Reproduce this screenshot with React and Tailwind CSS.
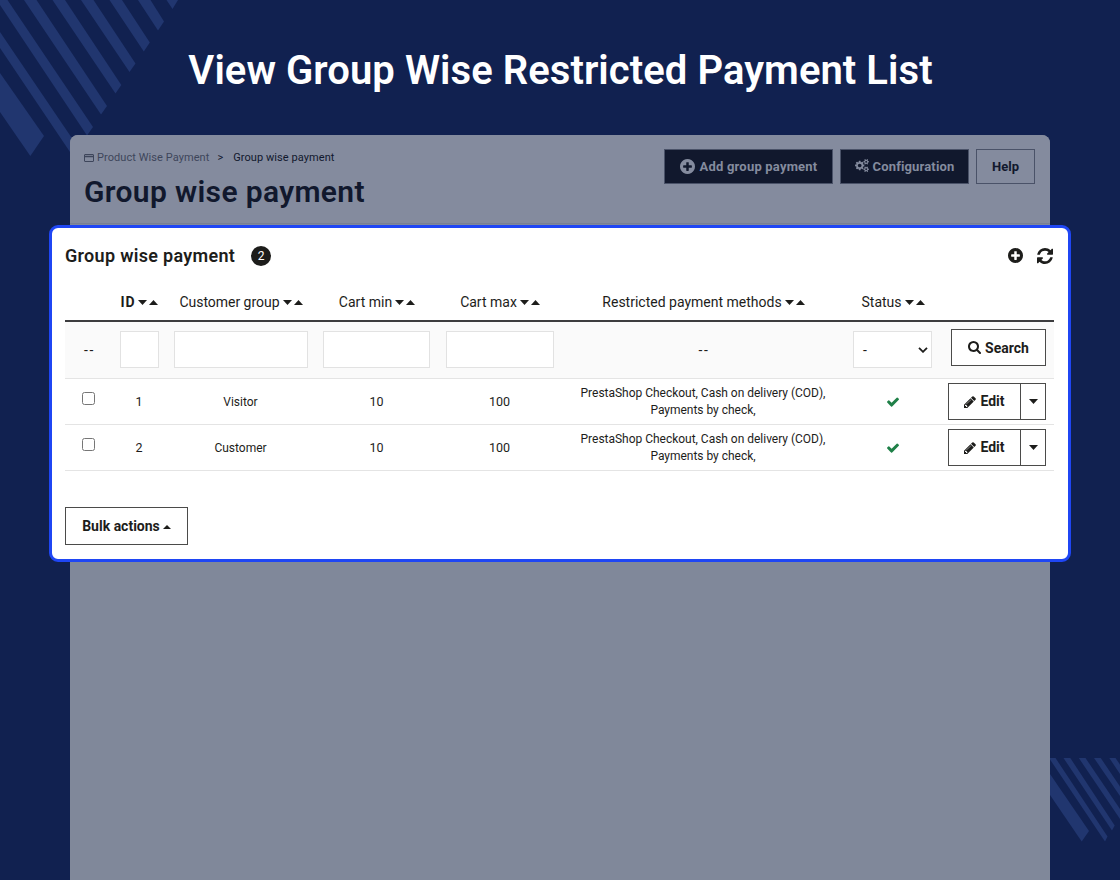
import { useState } from 'react';

// Font Awesome 4 glyphs
const ICONS = {
  plus: {
    box: '128 128 1536 1536',
    d: 'M1344 960v-128q0-26-19-45t-45-19h-256v-256q0-26-19-45t-45-19h-128q-26 0-45 19t-19 45v256h-256q-26 0-45 19t-19 45v128q0 26 19 45t45 19h256v256q0 26 19 45t45 19h128q26 0 45-19t19-45v-256h256q26 0 45-19t19-45zm320-64q0 209-103 385.5t-279.5 279.5-385.5 103-385.5-103-279.5-279.5-103-385.5 103-385.5 279.5-279.5 385.5-103 385.5 103 279.5 279.5 103 385.5z',
  },
  refresh: {
    box: '0 0 1536 1536',
    d: 'M1511 928q0 5-1 7-64 268-268 434.5t-478 166.5q-146 0-282.5-55t-243.5-157l-129 129q-19 19-45 19t-45-19-19-45v-448q0-26 19-45t45-19h448q26 0 45 19t19 45-19 45l-137 137q71 66 161 102t187 36q134 0 250-65t186-179q11-17 53-117 8-23 30-23h192q13 0 22.5 9.5t9.5 22.5zm25-800v448q0 26-19 45t-45 19h-448q-26 0-45-19t-19-45 19-45l138-138q-148-137-349-137-134 0-250 65t-186 179q-11 17-53 117-8 23-30 23h-199q-13 0-22.5-9.5t-9.5-22.5v-7q65-268 270-434.5t480-166.5q146 0 284 55.5t245 156.5l130-129q19-19 45-19t45 19 19 45z',
  },
  cogs: {
    box: '0 0 1920 1792',
    d: 'M896 896q0-106-75-181t-181-75-181 75-75 181 75 181 181 75 181-75 75-181zm768 512q0-52-38-90t-90-38-90 38-38 90q0 53 37.5 90.5t90.5 37.5 90.5-37.5 37.5-90.5zm0-1024q0-52-38-90t-90-38-90 38-38 90q0 53 37.5 90.5t90.5 37.5 90.5-37.5 37.5-90.5zm-384 421v185q0 10-7 19.5t-16 10.5l-155 24q-11 35-32 76 34 48 90 115 7 11 7 20 0 12-7 19-23 30-82.5 89.5t-78.5 59.5q-11 0-21-7l-115-90q-37 19-77 31-11 108-23 155-7 24-30 24h-186q-11 0-20-7.5t-10-17.5l-23-153q-34-10-75-31l-118 89q-7 7-20 7-11 0-21-8-144-133-144-160 0-9 7-19 10-14 41-53t47-61q-23-44-35-82l-152-24q-10-1-17-9.5t-7-19.5v-185q0-10 7-19.5t16-10.5l155-24q11-35 32-76-34-48-90-115-7-11-7-20 0-12 7-20 22-30 82-89t79-59q11 0 21 7l115 90q34-18 77-32 11-108 23-154 7-24 30-24h186q11 0 20 7.5t10 17.5l23 153q34 10 75 31l118-89q8-7 20-7 11 0 21 8 144 133 144 160 0 8-7 19-12 16-42 54t-45 60q23 48 34 82l152 23q10 2 17 10.5t7 19.5zm640 533v140q0 16-149 31-12 27-30 52 51 113 51 138 0 4-4 7-122 71-124 71-8 0-46-47t-52-68q-20 2-30 2t-30-2q-14 21-52 68t-46 47q-2 0-124-71-4-3-4-7 0-25 51-138-18-25-30-52-149-15-149-31v-140q0-16 149-31 13-29 30-52-51-113-51-138 0-4 4-7 4-2 35-20t59-34 30-16q8 0 46 46.5t52 67.5q20-2 30-2t30 2q51-71 92-112l6-2q4 0 124 70 4 3 4 7 0 25-51 138 17 23 30 52 149 15 149 31zm0-1024v140q0 16-149 31-12 27-30 52 51 113 51 138 0 4-4 7-122 71-124 71-8 0-46-47t-52-68q-20 2-30 2t-30-2q-14 21-52 68t-46 47q-2 0-124-71-4-3-4-7 0-25 51-138-18-25-30-52-149-15-149-31v-140q0-16 149-31 13-29 30-52-51-113-51-138 0-4 4-7 4-2 35-20t59-34 30-16q8 0 46 46.5t52 67.5q20-2 30-2t30 2q51-71 92-112l6-2q4 0 124 70 4 3 4 7 0 25-51 138 17 23 30 52 149 15 149 31z',
  },
  search: {
    box: '64 128 1664 1664',
    d: 'M1216 832q0-185-131.5-316.5t-316.5-131.5-316.5 131.5-131.5 316.5 131.5 316.5 316.5 131.5 316.5-131.5 131.5-316.5zm512 832q0 52-38 90t-90 38q-54 0-90-38l-343-342q-179 124-399 124-143 0-273.5-55.5t-225-150-150-225-55.5-273.5 55.5-273.5 150-225 225-150 273.5-55.5 273.5 55.5 225 150 150 225 55.5 273.5q0 220-124 399l343 343q37 37 37 90z',
  },
  pencil: {
    box: '128 128 1536 1536',
    d: 'M491 1536l91-91-235-235-91 91v107h128v128h107zm523-928q0-22-22-22-10 0-17 7l-542 542q-7 7-7 17 0 22 22 22 10 0 17-7l542-542q7-7 7-17zm-54-192l416 416-832 832h-416v-416zm683 96q0 53-37 90l-166 166-416-416 166-165q36-38 90-38 53 0 91 38l235 234q37 39 37 91z',
  },
  check: {
    box: '121 300 1550 1240',
    d: 'M1671 566q0 40-28 68l-724 724-136 136q-28 28-68 28t-68-28l-136-136-362-362q-28-28-28-68t28-68l136-136q28-28 68-28t68 28l294 295 656-657q28-28 68-28t68 28l136 136q28 28 28 68z',
  },
};

const COLUMNS = [
  { key: 'id', label: 'ID', className: 'font-bold tracking-[0.8px]' },
  { key: 'group', label: 'Customer group', className: 'tracking-[-0.03px]' },
  { key: 'min', label: 'Cart min', className: '' },
  { key: 'max', label: 'Cart max', className: '' },
  { key: 'methods', label: 'Restricted payment methods', className: '' },
  { key: 'status', label: 'Status', className: '' },
];

const METHODS = ['PrestaShop Checkout, Cash on delivery (COD),', 'Payments by check,'];

const ROWS = [
  { id: 1, group: 'Visitor', min: 10, max: 100, methods: METHODS },
  { id: 2, group: 'Customer', min: 10, max: 100, methods: METHODS },
];

const GRID = 'grid grid-cols-[47px_54px_149px_123px_123px_284px_95px_114px] items-center';

function Icon({ name, className }) {
  return (
    <svg viewBox={ICONS[name].box} className={className} fill="currentColor">
      <path d={ICONS[name].d} />
    </svg>
  );
}

function Caret({ up, className = 'h-[5px] w-[9px]' }) {
  return (
    <svg viewBox="0 0 10 5" preserveAspectRatio="none" className={className} fill="currentColor">
      <path d={up ? 'M0 5L5 0L10 5z' : 'M0 0L5 5L10 0z'} />
    </svg>
  );
}

function Stripes() {
  return (
    <svg className="absolute inset-0" width="1120" height="880" fill="#21366f">
      <path d="M0 73L44 136L30.300 156L0 112z" />
      <path d="M0 32L78.600 148L72.700 156L0 48z" />
      <path d="M0 0H7.500L93 127L87 135.500L0 5z" />
      <path d="M24 0H36.500L107 106L101 114.500z" />
      <path d="M52.500 0H65L121.300 85L115.500 93.500z" />
      <path d="M81 0H93.500L135.500 63.500L129.500 72z" />
      <path d="M109.500 0H122L149.800 42.500L143.800 51.500z" />
      <path d="M138 0H150.500L164 21.500L158 30.500z" />
      <path d="M166.500 0H178L172.500 9z" />
      <path d="M1050 774L1089 831L1081.700 841.500L1050 795z" />
      <path d="M1049 758H1055.500L1107.500 836.500L1105 841.500z" />
      <path d="M1063.500 758H1070.300L1114.700 825.500L1112 830.500z" />
      <path d="M1078.800 758H1085.500L1120 809V819z" />
      <path d="M1094 758H1100.700L1120 786.500V796z" />
      <path d="M1109.300 758H1115.500L1120 764.500V774z" />
    </svg>
  );
}

function App() {
  const [selected, setSelected] = useState([]);

  const toggle = (id) => {
    setSelected(selected.includes(id) ? selected.filter(s => s !== id) : [...selected, id]);
  };

  return (
    <div className="relative h-[880px] w-[1120px] overflow-hidden bg-[#112150] font-['Roboto',sans-serif] text-[#1d1d1b]">
      <Stripes />
      <div className="relative flex h-full flex-col items-center">
        <h1 className="flex h-[135px] shrink-0 items-center pt-[7px] pl-px text-[40px] font-semibold tracking-[0.06px] whitespace-nowrap text-white">
          View Group Wise Restricted Payment List
        </h1>

        <div className="h-[745px] w-[980px] rounded-t-lg bg-[#80889a]">
          <header className="flex h-[89px] justify-between rounded-t-lg border-b border-[#777f93] bg-[#848b9e] pr-[15px] pl-[14px] text-[#11182d]">
            <div className="pt-[15px]">
              <nav className="flex h-4 items-center text-[11px] tracking-[0.07px] whitespace-nowrap">
                <svg viewBox="0 0 10 8" className="mr-[3px] h-2 w-[10px] text-[#3e465b]" fill="none" stroke="currentColor">
                  <rect x="0.5" y="0.5" width="9" height="7" rx="0.5" />
                  <path d="M0 2.500H10" strokeWidth="1.500" />
                </svg>
                <span className="text-[#3e465b]">Product Wise Payment</span>
                <span className="mr-[10px] ml-[8px]">&gt;</span>
                <span>Group wise payment</span>
              </nav>
              <h2 className="mt-[8px] text-[30px] leading-[36px] font-semibold tracking-[0.35px] whitespace-nowrap">Group wise payment</h2>
            </div>
            <div className="flex gap-[7px] pt-[14px] text-[13px] font-bold whitespace-nowrap">
              <button className="flex h-[35px] w-[169px] items-center justify-center border border-[#4a5268] bg-[#11182d] tracking-[0.2px] text-[#848b9e]">
                <Icon name="plus" className="mr-[5px] size-[15px]" />
                Add group payment
              </button>
              <button className="flex h-[35px] w-[129px] items-center justify-center border border-[#4a5268] bg-[#11182d] tracking-[0.15px] text-[#848b9e]">
                <Icon name="cogs" className="mr-[4px] mb-0.5 h-[13px] w-[14px]" />
                Configuration
              </button>
              <button className="h-[35px] w-[59px] border border-[#4a5268]">Help</button>
            </div>
          </header>
        </div>
      </div>

      {/* highlighted card, on top of the dimmed page */}
      <section className="absolute top-[225px] left-[49px] flex h-[337px] w-[1022px] flex-col rounded-[9px] border-[3px] border-[#1f46f4] bg-white px-[13px]">
        <div className="flex h-[56px] items-center pb-px">
          <h3 className="text-[18px] font-semibold tracking-[0.3px] whitespace-nowrap">Group wise payment</h3>
          <span className="ml-4 flex size-5 items-center justify-center rounded-full bg-[#1d1d1b] text-xs text-white">2</span>
          <Icon name="plus" className="mr-[14px] ml-auto size-[15px]" />
          <Icon name="refresh" className="mr-[2px] size-[16px]" />
        </div>

        <div className={`${GRID} h-[38px] w-[989px] border-b-2 border-[#3d3d3f] text-[14px]`}>
          <span />
          {COLUMNS.map(col => (
            <div key={col.key} className="flex items-center justify-center pl-px whitespace-nowrap">
              <span className={col.className}>{col.label}</span>
              <Caret className="ml-[3px] h-[5px] w-[9px]" />
              <Caret up className="ml-[2px] h-[5px] w-[9px]" />
            </div>
          ))}
        </div>

        <div className={`${GRID} h-[57px] w-[989px] border-b border-[#e4e4e4] bg-[#fafafa] text-center text-sm`}>
          <span className="pl-[2px] tracking-[1.6px]">--</span>
          <input className="mx-auto mb-px h-[37px] w-[39px] border border-[#e2e2e2] bg-white" />
          <input className="mx-auto mb-px h-[37px] w-[134px] border border-[#e2e2e2] bg-white" />
          <input className="mx-auto mb-px h-[37px] w-[107px] border border-[#e2e2e2] bg-white" />
          <input className="mx-auto mb-px h-[37px] w-[108px] border border-[#e2e2e2] bg-white" />
          <span className="pl-[2px] tracking-[1.6px]">--</span>
          <div className="mx-auto mb-px flex h-[37px] w-[79px] items-center justify-between border border-[#e2e2e2] bg-white pr-[3px] pl-[9px]">
            <span>-</span>
            <svg viewBox="0 0 10 6" className="h-[6px] w-[10px]" fill="none" stroke="currentColor" strokeWidth="1.800">
              <path d="M1 0.800L5 4.800L9 0.800" />
            </svg>
          </div>
          <button className="mr-2 mb-[5px] ml-auto flex h-[37px] w-[95px] items-center justify-center border border-[#4b4b4a] bg-white text-[14px] font-bold">
            <Icon name="search" className="mr-1 size-[13px]" />
            Search
          </button>
        </div>

        {ROWS.map(row => (
          <div key={row.id} className={`${GRID} h-[46px] w-[989px] shrink-0 border-b border-[#e4e4e4] text-center text-[12.5px]`}>
            <input
              type="checkbox"
              className="mx-auto mb-[6px] size-[13px]"
              checked={selected.includes(row.id)}
              onChange={() => toggle(row.id)}
            />
            <span className="pt-px">{row.id}</span>
            <span className="pt-px text-[12px]">{row.group}</span>
            <span className="pt-px">{row.min}</span>
            <span className="pt-px">{row.max}</span>
            <div className="pt-px text-[12px] leading-[17px] tracking-[-0.02px] whitespace-nowrap">
              {row.methods.map(line => <p key={line}>{line}</p>)}
            </div>
            <Icon name="check" className="mx-auto mt-px h-[10px] w-[12px] text-[#1f8048]" />
            <div className="mr-2 ml-auto flex h-[37px] w-[98px] border border-[#4b4b4a] text-[14px] font-bold">
              <button className="flex w-[72px] items-center justify-center border-r border-[#4b4b4a]">
                <Icon name="pencil" className="mr-1 size-[12px]" />
                Edit
              </button>
              <button className="flex flex-1 items-center justify-center"><Caret /></button>
            </div>
          </div>
        ))}

        <button className="mt-[36px] flex h-[38px] w-[123px] items-center justify-center border border-[#4b4b4a] text-[14px] font-bold whitespace-nowrap">
          Bulk actions
          <Caret up className="mt-[2px] ml-[3px] h-[4px] w-[8px]" />
        </button>
      </section>
    </div>
  );
}

export default App;
